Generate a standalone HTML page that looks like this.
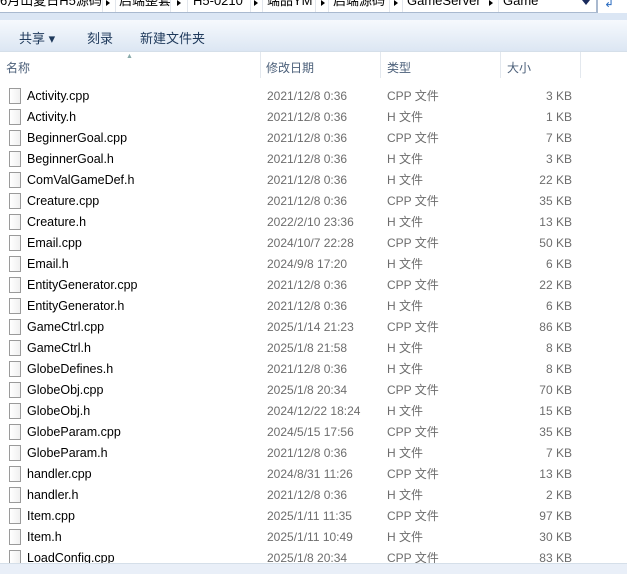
<!DOCTYPE html>
<html><head><meta charset="utf-8"><style>
*{margin:0;padding:0;box-sizing:border-box}
body{width:627px;height:574px;overflow:hidden;background:#fff;font-family:"Liberation Sans","Noto Sans CJK SC",sans-serif;font-size:12px;position:relative}
.top{position:absolute;left:0;top:0;width:627px;height:20px;background:#dbe6f4}
.addr{position:absolute;left:0;top:0;width:597px;height:13px;background:#fff;border-bottom:1px solid #a9b9cf;border-right:1px solid #a9b9cf;overflow:hidden}
.addr span{position:absolute;top:-8px;white-space:nowrap;color:#000;font-size:13px;line-height:17px}
.addr i{position:absolute;top:0;width:1px;height:13px;background:#e2e6ec}
.addr b{position:absolute;top:0;width:0;height:0;border-left:4px solid #000;border-top:3px solid transparent;border-bottom:3px solid transparent}
.ref{position:absolute;left:597px;top:0;width:30px;height:13px;background:#fff;border-left:1px solid #a9b9cf}
.tb{position:absolute;left:0;top:20px;width:627px;height:32px;background:linear-gradient(#f6f9fd,#e9f0f8 50%,#dce6f3);border-bottom:1px solid #d5dfe9;color:#1e395b;font-size:13px}
.tb span{position:absolute;top:8px}
.hdr{position:absolute;left:0;top:52px;width:627px;height:26px;background:#fff;color:#4c607a;font-size:12px}
.hdr span{position:absolute;top:7px}
.hdr i{position:absolute;top:0;width:1px;height:26px;background:#e3e8ee}
.row{position:absolute;left:0;width:627px;height:21px;line-height:21px}
.row .ic{position:absolute;left:9px;top:2px;width:12px;height:16px;border:1px solid #9a9a9a;background:linear-gradient(90deg,#fff,#f0f0f0)}
.row .n{position:absolute;left:27px;color:#000;font-size:12.5px}
.row .d{position:absolute;left:267px;color:#6d6d6d}
.row .t{position:absolute;left:387px;color:#6d6d6d}
.row .s{position:absolute;right:55px;color:#6d6d6d}
.bot{position:absolute;left:0;top:563px;width:627px;height:11px;background:#e9eff8;border-top:1px solid #d5dfe9}
</style></head><body>
<div class="top">
<div class="addr">
<span style="left:0">6月山夏日H5源码</span><i style="left:102px"></i><b style="left:106px"></b><i style="left:115px"></i>
<span style="left:119px">启端整套</span><i style="left:170px"></i><b style="left:177px"></b><i style="left:187px"></i>
<span style="left:193px">H5-0210</span><i style="left:250px"></i><b style="left:254px"></b><i style="left:262px"></i>
<span style="left:267px">端品YM</span><i style="left:315px"></i><b style="left:321px"></b><i style="left:328px"></i>
<span style="left:333px">启端源码</span><i style="left:389px"></i><b style="left:394px"></b><i style="left:402px"></i>
<span style="left:407px">GameServer</span><b style="left:489px"></b><i style="left:498px"></i>
<span style="left:503px">Game</span>
<div style="position:absolute;left:582px;top:0;width:0;height:0;border-top:5px solid #1a2b5c;border-left:4px solid transparent;border-right:4px solid transparent"></div>
</div>
<div class="ref"><div style="position:absolute;left:6px;top:-4px;color:#2a6bc0;font-size:12px">↲</div></div>
</div>
<div class="tb"><span style="left:19px">共享 ▾</span><span style="left:87px">刻录</span><span style="left:140px">新建文件夹</span></div>
<div class="hdr">
<div style="position:absolute;left:126px;top:1px;font-size:7px;color:#8aa">▲</div>
<span style="left:6px">名称</span><i style="left:260px"></i>
<span style="left:266px">修改日期</span><i style="left:380px"></i>
<span style="left:387px">类型</span><i style="left:500px"></i>
<span style="left:507px">大小</span><i style="left:580px"></i>
</div>
<div id="rows"></div>
<div class="bot"></div>
<script>
var d=[["Activity.cpp","2021/12/8 0:36","CPP 文件","3 KB"],["Activity.h","2021/12/8 0:36","H 文件","1 KB"],["BeginnerGoal.cpp","2021/12/8 0:36","CPP 文件","7 KB"],["BeginnerGoal.h","2021/12/8 0:36","H 文件","3 KB"],["ComValGameDef.h","2021/12/8 0:36","H 文件","22 KB"],["Creature.cpp","2021/12/8 0:36","CPP 文件","35 KB"],["Creature.h","2022/2/10 23:36","H 文件","13 KB"],["Email.cpp","2024/10/7 22:28","CPP 文件","50 KB"],["Email.h","2024/9/8 17:20","H 文件","6 KB"],["EntityGenerator.cpp","2021/12/8 0:36","CPP 文件","22 KB"],["EntityGenerator.h","2021/12/8 0:36","H 文件","6 KB"],["GameCtrl.cpp","2025/1/14 21:23","CPP 文件","86 KB"],["GameCtrl.h","2025/1/8 21:58","H 文件","8 KB"],["GlobeDefines.h","2021/12/8 0:36","H 文件","8 KB"],["GlobeObj.cpp","2025/1/8 20:34","CPP 文件","70 KB"],["GlobeObj.h","2024/12/22 18:24","H 文件","15 KB"],["GlobeParam.cpp","2024/5/15 17:56","CPP 文件","35 KB"],["GlobeParam.h","2021/12/8 0:36","H 文件","7 KB"],["handler.cpp","2024/8/31 11:26","CPP 文件","13 KB"],["handler.h","2021/12/8 0:36","H 文件","2 KB"],["Item.cpp","2025/1/11 11:35","CPP 文件","97 KB"],["Item.h","2025/1/11 10:49","H 文件","30 KB"],["LoadConfig.cpp","2025/1/8 20:34","CPP 文件","83 KB"]];
var h="";d.forEach(function(r,i){h+='<div class="row" style="top:'+(86+21*i)+'px"><div class="ic"></div><span class="n">'+r[0]+'</span><span class="d">'+r[1]+'</span><span class="t">'+r[2]+'</span><span class="s">'+r[3]+'</span></div>';});
document.getElementById("rows").innerHTML=h;
</script>
</body></html>
